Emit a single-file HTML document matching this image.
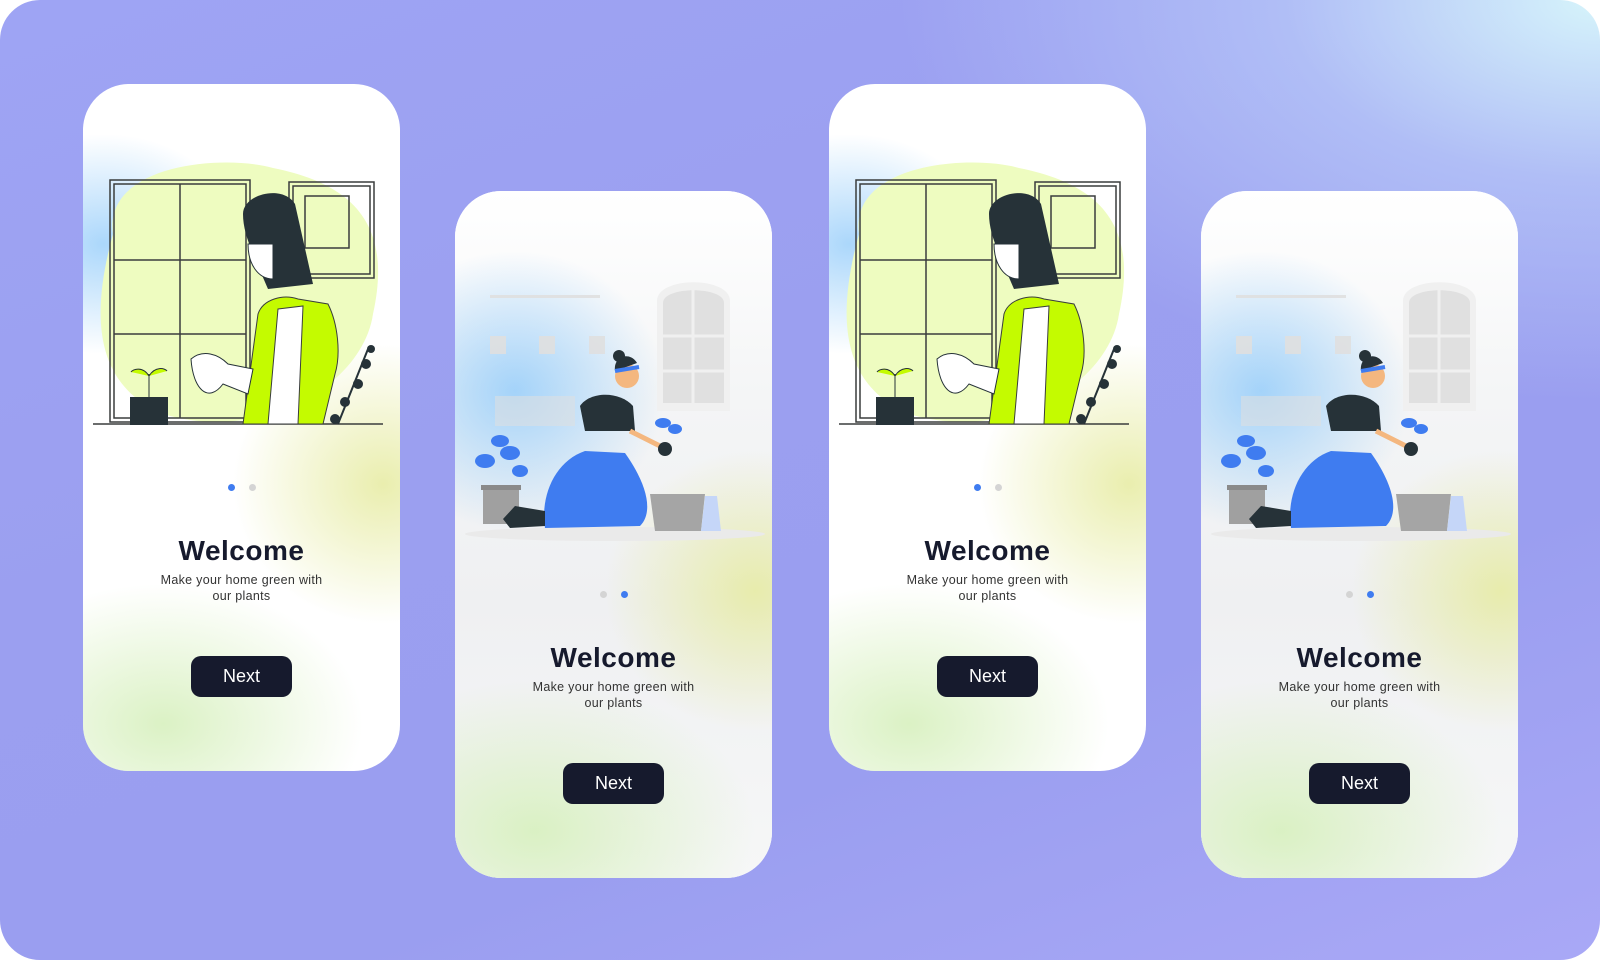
<!DOCTYPE html>
<html><head><meta charset="utf-8"><style>
html,body{margin:0;padding:0;background:#fff;}
.page{position:relative;width:1600px;height:960px;border-radius:40px;overflow:hidden;
background:radial-gradient(ellipse 700px 400px at 1600px 0px,#d6f4fb 0%,rgba(190,210,250,0.6) 45%,rgba(160,170,245,0) 100%),linear-gradient(160deg,#9ea4f4 0%,#9b9ff0 40%,#9a9ef0 70%,#a9a8f6 100%);font-family:"Liberation Sans",sans-serif;}
.card{position:absolute;width:317px;height:687px;border-radius:46px;overflow:hidden;background:#fff;}
.card .bg{position:absolute;inset:0;
background:radial-gradient(ellipse 140px 110px at 20px 160px,rgba(150,205,250,0.8),rgba(150,205,250,0) 100%),
radial-gradient(ellipse 150px 140px at 300px 400px,rgba(230,235,160,0.85),rgba(230,235,160,0) 100%),
radial-gradient(ellipse 200px 140px at 80px 640px,rgba(215,240,190,0.9),rgba(215,240,190,0) 100%);}
.card.b .bg{background:radial-gradient(ellipse 150px 140px at 60px 200px,rgba(150,205,250,0.85),rgba(150,205,250,0) 100%),
radial-gradient(ellipse 150px 140px at 300px 400px,rgba(230,235,160,0.85),rgba(230,235,160,0) 100%),
radial-gradient(ellipse 220px 150px at 80px 640px,rgba(215,240,190,0.9),rgba(215,240,190,0) 100%),linear-gradient(#ffffff 0%,#f4f5f6 30%,#eff0f2 60%,#f6f7f7 100%);}
.dots{position:absolute;top:394px;left:0;width:100%;text-align:center;}
.dots i{display:inline-block;width:7px;height:7px;border-radius:50%;background:#d4d4d4;margin:0 7px;}
.dots i.on{background:#3f7cf0;}
.t{position:absolute;left:0;width:100%;text-align:center;top:451px;font-size:28px;font-weight:bold;color:#161a2d;letter-spacing:0.5px;}
.s{position:absolute;left:0;width:100%;text-align:center;top:488px;font-size:12.5px;line-height:16px;color:#333;letter-spacing:0.3px;}
.btn{position:absolute;left:108px;top:572px;width:101px;height:41px;border-radius:10px;background:#161a2d;color:#fff;font-size:18px;text-align:center;line-height:41px;}
svg{position:absolute;left:0;top:0;}
</style></head><body><div class="page">

<div class="card" style="left:83px;top:84px">
<div class="bg"></div>
<svg width="317" height="360" viewBox="0 0 317 360">
<path d="M30 150 C20 80 140 70 190 84 C270 100 310 140 290 230 C280 300 180 360 80 330 C10 300 8 230 30 150Z" fill="#eefcc0"/>
<g fill="none" stroke="#3a3d3d" stroke-width="1.5">
<rect x="27" y="96" width="140" height="242"/><rect x="31" y="100" width="132" height="234"/>
<line x1="97" y1="100" x2="97" y2="334"/><line x1="31" y1="176" x2="163" y2="176"/><line x1="31" y1="250" x2="163" y2="250"/>
<rect x="206" y="98" width="85" height="96"/><rect x="210" y="102" width="77" height="88"/><rect x="222" y="112" width="44" height="52"/>
<line x1="10" y1="340" x2="300" y2="340"/>
</g>
<path d="M160 340 L175 230 C180 215 200 210 215 215 L245 220 C255 240 258 270 252 290 L240 340Z" fill="#c4fb00" stroke="#3a3d3d"/>
<path d="M195 225 L220 222 L215 340 L185 340Z" fill="#fff" stroke="#3a3d3d"/>
<path d="M160 130 C160 110 200 100 212 120 L230 200 L185 205 C170 170 160 150 160 130Z" fill="#263238"/>
<path d="M165 160 C165 180 175 195 190 195 L190 160Z" fill="#fff" stroke="#263238"/>
<path d="M108 275 C120 265 135 270 145 280 L170 285 L165 310 L140 300 C125 320 110 305 108 275Z" fill="#fff" stroke="#263238"/>
<rect x="47" y="313" width="38" height="28" fill="#263238"/>
<path d="M66 313 L66 290 M66 292 C60 282 50 285 48 288 M66 292 C72 282 82 284 84 287" stroke="#263238" fill="#c4fb00"/>
<g fill="#263238"><circle cx="262" cy="318" r="5"/><circle cx="275" cy="300" r="5"/><circle cx="283" cy="280" r="5"/><circle cx="288" cy="265" r="4"/><circle cx="252" cy="335" r="5"/></g>
<path d="M255 340 L285 265" stroke="#263238" stroke-width="2"/>
</svg>
<div class="dots" style="top:394px"><i class="on"></i><i></i></div>
<div class="t">Welcome</div>
<div class="s">Make your home green with<br>our plants</div>
<div class="btn">Next</div>
</div>

<div class="card b" style="left:455px;top:191px">
<div class="bg"></div>
<svg width="317" height="360" viewBox="0 0 317 360">
<g fill="#e0e0e0" opacity="0.9">
<rect x="35" y="104" width="110" height="3"/>
<rect x="35" y="145" width="16" height="18"/><rect x="84" y="145" width="16" height="18"/><rect x="134" y="145" width="16" height="18"/>
<rect x="40" y="205" width="80" height="30" opacity="0.6"/>
</g>
<path d="M202 110 C202 85 275 85 275 110 L275 220 L202 220Z" fill="#f0f0f0"/>
<path d="M208 112 C208 95 269 95 269 112 L269 212 L208 212Z" fill="#e0e0e0"/>
<path d="M238 95 L238 212 M208 145 L269 145 M208 180 L269 180" stroke="#f0f0f0" stroke-width="3"/>
<ellipse cx="160" cy="343" rx="150" ry="7" fill="#eaeaea"/>
<rect x="28" y="297" width="36" height="36" fill="#a0a0a0"/><rect x="26" y="294" width="40" height="5" fill="#8a8a8a"/>
<g fill="#3f7cf0"><ellipse cx="30" cy="270" rx="10" ry="7"/><ellipse cx="55" cy="262" rx="10" ry="7"/><ellipse cx="45" cy="250" rx="9" ry="6"/><ellipse cx="65" cy="280" rx="8" ry="6"/></g>
<path d="M90 337 C85 305 100 270 130 260 L170 262 C190 290 200 320 185 335Z" fill="#3f7cf0"/>
<path d="M125 215 C135 200 165 200 178 215 L180 240 L130 240Z" fill="#263238"/>
<path d="M48 328 L60 315 L90 320 L90 335 L55 337Z" fill="#263238"/>
<circle cx="172" cy="185" r="12" fill="#f4b77f"/>
<path d="M160 180 C158 165 175 160 182 172Z" fill="#263238"/><circle cx="164" cy="165" r="6" fill="#263238"/>
<path d="M160 180 L184 176" stroke="#3f7cf0" stroke-width="4"/>
<path d="M175 240 L205 255" stroke="#f4b77f" stroke-width="5"/>
<circle cx="210" cy="258" r="7" fill="#263238"/>
<g fill="#3f7cf0"><ellipse cx="208" cy="232" rx="8" ry="5"/><ellipse cx="220" cy="238" rx="7" ry="5"/></g>
<path d="M195 303 L250 303 L246 340 L200 340Z" fill="#a5a5a5"/>
<path d="M250 305 L262 305 L266 340 L246 340Z" fill="#c5d6f8"/>
</svg>
<div class="dots"><i></i><i class="on"></i></div>
<div class="t">Welcome</div>
<div class="s">Make your home green with<br>our plants</div>
<div class="btn">Next</div>
</div>

<div class="card" style="left:829px;top:84px">
<div class="bg"></div>
<svg width="317" height="360" viewBox="0 0 317 360">
<path d="M30 150 C20 80 140 70 190 84 C270 100 310 140 290 230 C280 300 180 360 80 330 C10 300 8 230 30 150Z" fill="#eefcc0"/>
<g fill="none" stroke="#3a3d3d" stroke-width="1.5">
<rect x="27" y="96" width="140" height="242"/><rect x="31" y="100" width="132" height="234"/>
<line x1="97" y1="100" x2="97" y2="334"/><line x1="31" y1="176" x2="163" y2="176"/><line x1="31" y1="250" x2="163" y2="250"/>
<rect x="206" y="98" width="85" height="96"/><rect x="210" y="102" width="77" height="88"/><rect x="222" y="112" width="44" height="52"/>
<line x1="10" y1="340" x2="300" y2="340"/>
</g>
<path d="M160 340 L175 230 C180 215 200 210 215 215 L245 220 C255 240 258 270 252 290 L240 340Z" fill="#c4fb00" stroke="#3a3d3d"/>
<path d="M195 225 L220 222 L215 340 L185 340Z" fill="#fff" stroke="#3a3d3d"/>
<path d="M160 130 C160 110 200 100 212 120 L230 200 L185 205 C170 170 160 150 160 130Z" fill="#263238"/>
<path d="M165 160 C165 180 175 195 190 195 L190 160Z" fill="#fff" stroke="#263238"/>
<path d="M108 275 C120 265 135 270 145 280 L170 285 L165 310 L140 300 C125 320 110 305 108 275Z" fill="#fff" stroke="#263238"/>
<rect x="47" y="313" width="38" height="28" fill="#263238"/>
<path d="M66 313 L66 290 M66 292 C60 282 50 285 48 288 M66 292 C72 282 82 284 84 287" stroke="#263238" fill="#c4fb00"/>
<g fill="#263238"><circle cx="262" cy="318" r="5"/><circle cx="275" cy="300" r="5"/><circle cx="283" cy="280" r="5"/><circle cx="288" cy="265" r="4"/><circle cx="252" cy="335" r="5"/></g>
<path d="M255 340 L285 265" stroke="#263238" stroke-width="2"/>
</svg>
<div class="dots"><i class="on"></i><i></i></div>
<div class="t">Welcome</div>
<div class="s">Make your home green with<br>our plants</div>
<div class="btn">Next</div>
</div>

<div class="card b" style="left:1201px;top:191px">
<div class="bg"></div>
<svg width="317" height="360" viewBox="0 0 317 360">
<g fill="#e0e0e0" opacity="0.9">
<rect x="35" y="104" width="110" height="3"/>
<rect x="35" y="145" width="16" height="18"/><rect x="84" y="145" width="16" height="18"/><rect x="134" y="145" width="16" height="18"/>
<rect x="40" y="205" width="80" height="30" opacity="0.6"/>
</g>
<path d="M202 110 C202 85 275 85 275 110 L275 220 L202 220Z" fill="#f0f0f0"/>
<path d="M208 112 C208 95 269 95 269 112 L269 212 L208 212Z" fill="#e0e0e0"/>
<path d="M238 95 L238 212 M208 145 L269 145 M208 180 L269 180" stroke="#f0f0f0" stroke-width="3"/>
<ellipse cx="160" cy="343" rx="150" ry="7" fill="#eaeaea"/>
<rect x="28" y="297" width="36" height="36" fill="#a0a0a0"/><rect x="26" y="294" width="40" height="5" fill="#8a8a8a"/>
<g fill="#3f7cf0"><ellipse cx="30" cy="270" rx="10" ry="7"/><ellipse cx="55" cy="262" rx="10" ry="7"/><ellipse cx="45" cy="250" rx="9" ry="6"/><ellipse cx="65" cy="280" rx="8" ry="6"/></g>
<path d="M90 337 C85 305 100 270 130 260 L170 262 C190 290 200 320 185 335Z" fill="#3f7cf0"/>
<path d="M125 215 C135 200 165 200 178 215 L180 240 L130 240Z" fill="#263238"/>
<path d="M48 328 L60 315 L90 320 L90 335 L55 337Z" fill="#263238"/>
<circle cx="172" cy="185" r="12" fill="#f4b77f"/>
<path d="M160 180 C158 165 175 160 182 172Z" fill="#263238"/><circle cx="164" cy="165" r="6" fill="#263238"/>
<path d="M160 180 L184 176" stroke="#3f7cf0" stroke-width="4"/>
<path d="M175 240 L205 255" stroke="#f4b77f" stroke-width="5"/>
<circle cx="210" cy="258" r="7" fill="#263238"/>
<g fill="#3f7cf0"><ellipse cx="208" cy="232" rx="8" ry="5"/><ellipse cx="220" cy="238" rx="7" ry="5"/></g>
<path d="M195 303 L250 303 L246 340 L200 340Z" fill="#a5a5a5"/>
<path d="M250 305 L262 305 L266 340 L246 340Z" fill="#c5d6f8"/>
</svg>
<div class="dots"><i></i><i class="on"></i></div>
<div class="t">Welcome</div>
<div class="s">Make your home green with<br>our plants</div>
<div class="btn">Next</div>
</div>

</div></body></html>
